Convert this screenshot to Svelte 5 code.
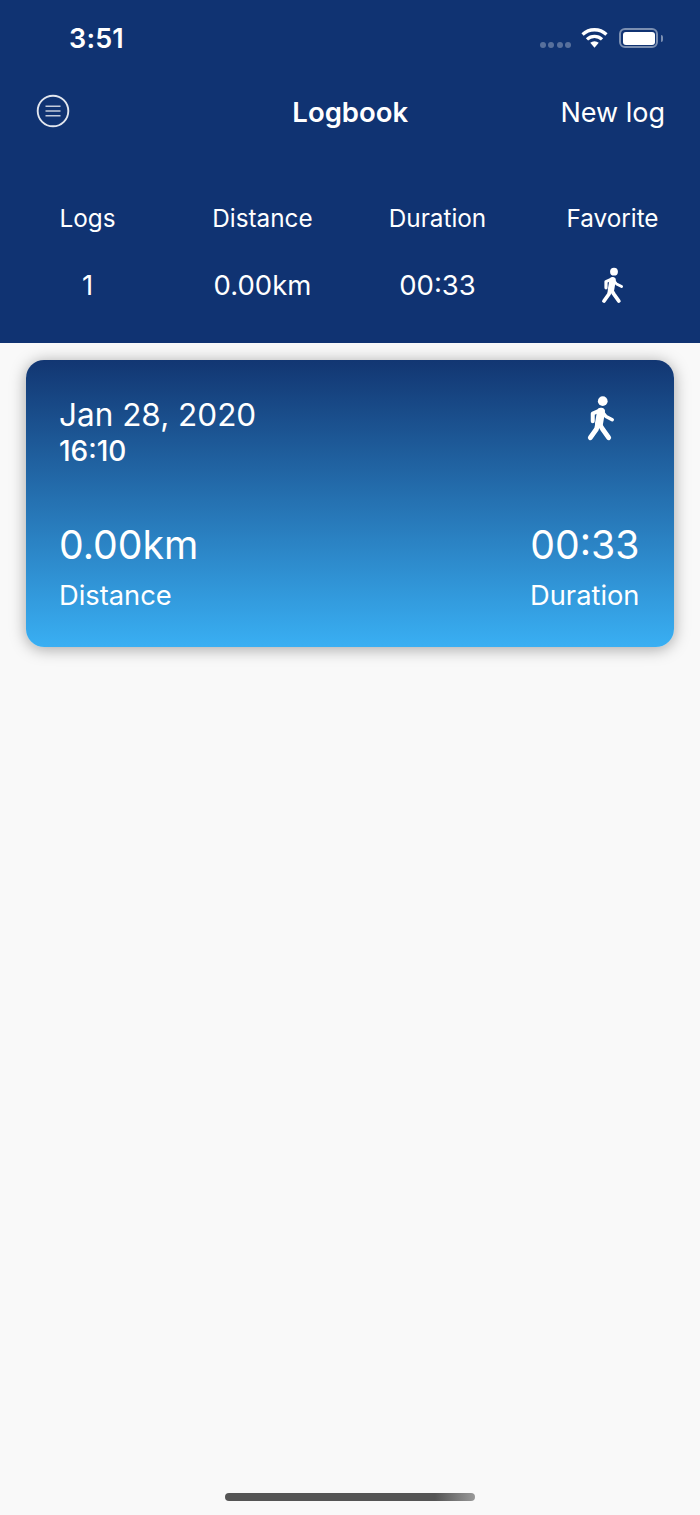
<script>
  const stats = [
    { label: "Logs", value: "1" },
    { label: "Distance", value: "0.00km" },
    { label: "Duration", value: "00:33" },
    { label: "Favorite", icon: true }
  ];
</script>

{#snippet walker(cls)}
  <svg class={cls} viewBox="0 0 28 38" fill="none" stroke="#fff" stroke-linecap="round" stroke-linejoin="round" aria-hidden="true">
    <circle cx="15" cy="5.7" r="3.9" fill="#fff" stroke="none" />
    <path d="M13.6 14.2L12 23.6" stroke-width="6.4" />
    <path d="M13 13L7 15.6V21.8" stroke-width="3.2" />
    <path d="M14.4 14L17.6 18L22.6 20.6" stroke-width="2.8" />
    <path d="M11 23.6L10 28L5 35" stroke-width="3.8" />
    <path d="M12 23.4L14.8 28L19.8 35" stroke-width="3.8" />
  </svg>
{/snippet}

<div class="screen">
  <header class="head">
    <div class="status">
      <span class="time">3:51</span>
      <div class="status-icons">
        <div class="dots"><i></i><i></i><i></i><i></i></div>
        <svg class="wifi" viewBox="0 0 28 20" aria-hidden="true">
          <path d="M14 20l-4.4-5a6.4 6.4 0 0 1 8.8 0z" fill="#fff" />
          <path d="M6.2 11.4a11.4 11.4 0 0 1 15.6 0" fill="none" stroke="#fff" stroke-width="3.4" />
          <path d="M1.6 6.4a18 18 0 0 1 24.8 0" fill="none" stroke="#fff" stroke-width="3.4" />
        </svg>
        <div class="battery"><span></span></div>
        <div class="nub"></div>
      </div>
    </div>

    <nav class="nav">
      <button class="menu" aria-label="Menu">
        <svg viewBox="0 0 34 34" width="34" height="34" fill="none" stroke="#fff" aria-hidden="true">
          <circle cx="17" cy="17" r="15.3" stroke-width="1.9" opacity="0.88" />
          <path d="M9.5 12.3h15M9.5 17h15M9.5 21.7h15" stroke-width="1.5" opacity="0.75" />
        </svg>
      </button>
      <h1>Logbook</h1>
      <span class="new">New log</span>
    </nav>

    <div class="stats">
      {#each stats as s}
        <div class="stat">
          <span class="stat-label">{s.label}</span>
          {#if s.icon}
            <span class="stat-value">{@render walker("walk-sm")}</span>
          {:else}
            <span class="stat-value">{s.value}</span>
          {/if}
        </div>
      {/each}
    </div>
  </header>

  <main class="list">
    <article class="card">
      <div class="card-top">
        <div>
          <div class="date">Jan 28, 2020</div>
          <div class="hour">16:10</div>
        </div>
        {@render walker("walk-lg")}
      </div>
      <div class="card-bottom">
        <div>
          <div class="big">0.00km</div>
          <div class="cap">Distance</div>
        </div>
        <div class="right">
          <div class="big">00:33</div>
          <div class="cap">Duration</div>
        </div>
      </div>
    </article>
  </main>

  <div class="home"></div>
</div>

<style>
  :global(body) { background: #f9f9f9; }

  .screen {
    width: 700px; height: 1515px; display: flex; flex-direction: column;
    font-family: Inter, "Liberation Sans", sans-serif; color: #fff; background: #f9f9f9;
  }

  .head { background: #103372; height: 343px; flex-shrink: 0; }

  .status { height: 76px; display: flex; justify-content: space-between; align-items: center; padding: 0 37px 0 69px; }
  .time { font-size: 27px; font-weight: 600; letter-spacing: 0.2px; }
  .status-icons { display: flex; align-items: center; }
  .dots { display: flex; gap: 2.3px; margin: 14px 10px 0 0; }
  .dots i { width: 6px; height: 6px; border-radius: 50%; background: #fff; opacity: 0.3; }
  .wifi { width: 27px; height: 20px; margin-right: 11px; }
  .battery { width: 39px; height: 20px; box-sizing: border-box; border: 2px solid rgba(255,255,255,0.45); border-radius: 6px; padding: 1.5px; }
  .battery span { display: block; height: 100%; background: #fff; border-radius: 3px; }
  .nub { width: 2px; height: 7px; margin-left: 3px; background: rgba(255,255,255,0.45); border-radius: 0 2px 2px 0; }

  .nav { height: 72px; display: grid; grid-template-columns: 1fr auto 1fr; align-items: center; padding: 0 35px 0 35.5px; }
  .menu { background: none; border: none; padding: 0; width: 34px; height: 34px; display: block; margin-top: -2px; }
  h1 { margin: 0; font-size: 27.5px; font-weight: 600; }
  .new { justify-self: end; font-size: 27px; }

  .stats { display: grid; grid-template-columns: repeat(4, 1fr); margin-top: 53px; }
  .stat { display: flex; flex-direction: column; align-items: center; }
  .stat-label { font-size: 24.3px; line-height: 34px; }
  .stat-value { font-size: 27.5px; line-height: 38px; margin-top: 30.5px; height: 38px; display: flex; align-items: center; }
  .walk-sm { width: 28px; height: 38px; display: block; }
  .walk-lg { width: 35px; height: 47.5px; display: block; margin: 34px 21px 0 0; }

  .list { padding: 17px 26px 0; }
  .card {
    height: 287px; box-sizing: border-box; border-radius: 18px; overflow: hidden;
    background: linear-gradient(#123672, #39aff3);
    box-shadow: 0 2px 16px rgba(0,0,0,0.35);
    display: flex; flex-direction: column; justify-content: space-between;
    padding: 0 34.5px 34px 33px;
  }
  .card-top { display: flex; justify-content: space-between; align-items: flex-start; }
  .date { font-size: 31.5px; line-height: 40px; margin-top: 35px; }
  .hour { font-size: 28px; line-height: 32px; font-weight: 450; }
  .card-bottom { display: flex; justify-content: space-between; }
  .right { text-align: right; }
  .big { font-size: 39.2px; line-height: 48px; }
  .cap { font-size: 27.3px; line-height: 34px; margin-top: 10px; }

  .home {
    width: 250px; height: 8px; margin: auto auto 14px; border-radius: 4px;
    background: linear-gradient(90deg, #555 0%, #555 84%, #999 100%);
  }
</style>
